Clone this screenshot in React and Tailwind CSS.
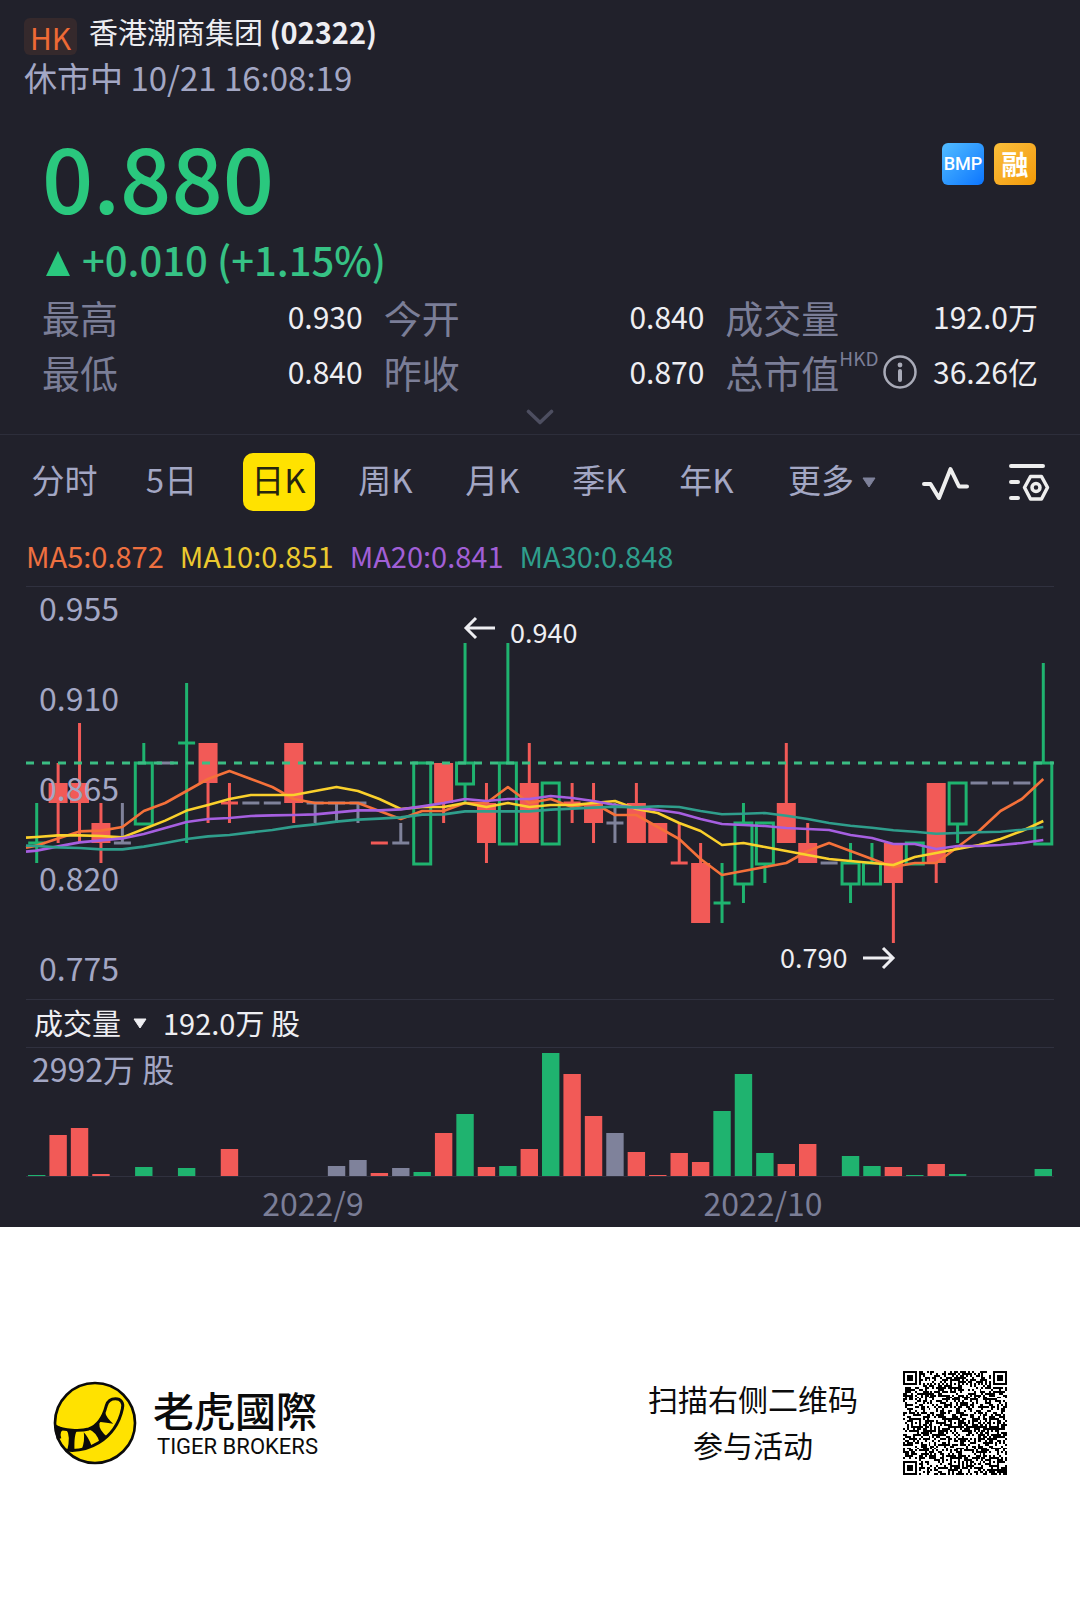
import React from "react";

const GREEN = "#1fb36f";
const RED = "#f25a57";
const GRAY = "#7f829b";

// [color, bodyTop, bodyBottom, high, low, volumeHeight] - prices in thousandths of HKD
const candles = [
  ["g", 840, 840, 860, 830, 1],
  ["r", 870, 860, 880, 840, 41],
  ["r", 870, 860, 900, 840, 48],
  ["r", 850, 840, 860, 830, 2],
  ["n", 840, 840, 860, 840, 0],
  ["g", 880, 850, 890, 850, 9],
  ["n", 880, 880, 880, 880, 0],
  ["g", 890, 890, 920, 840, 8],
  ["r", 890, 870, 890, 850, 0],
  ["r", 860, 860, 870, 850, 27],
  ["n", 860, 860, 860, 860, 0],
  ["n", 860, 860, 860, 860, 0],
  ["r", 890, 860, 890, 850, 0],
  ["n", 860, 860, 860, 850, 0],
  ["n", 860, 860, 860, 850, 10],
  ["n", 860, 860, 860, 850, 16],
  ["r", 840, 840, 840, 840, 3],
  ["n", 840, 840, 850, 840, 8],
  ["g", 880, 830, 880, 830, 4],
  ["r", 880, 860, 880, 850, 43],
  ["g", 880, 870, 940, 860, 62],
  ["r", 860, 840, 870, 830, 9],
  ["g", 880, 840, 940, 840, 10],
  ["r", 870, 840, 890, 840, 27],
  ["g", 870, 840, 870, 840, 123],
  ["r", 860, 860, 870, 850, 102],
  ["r", 860, 850, 870, 840, 60],
  ["n", 850, 850, 860, 840, 43],
  ["r", 860, 840, 870, 840, 24],
  ["r", 850, 840, 850, 840, 1],
  ["r", 830, 830, 850, 830, 23],
  ["r", 830, 800, 840, 800, 14],
  ["g", 810, 810, 830, 800, 65],
  ["g", 850, 820, 860, 810, 102],
  ["g", 850, 830, 850, 820, 23],
  ["r", 860, 840, 890, 840, 12],
  ["r", 840, 830, 850, 830, 32],
  ["n", 830, 830, 830, 830, 0],
  ["g", 830, 820, 840, 810, 20],
  ["g", 830, 820, 840, 820, 10],
  ["r", 840, 820, 840, 790, 9],
  ["g", 840, 830, 840, 830, 1],
  ["r", 870, 830, 870, 820, 12],
  ["g", 870, 850, 870, 840, 2],
  ["n", 870, 870, 870, 870, 0],
  ["n", 870, 870, 870, 870, 0],
  ["n", 870, 870, 870, 870, 0],
  ["g", 880, 840, 930, 840, 7],
];

const COLORS = { g: GREEN, r: RED, n: GRAY };
const STEP = 1028 / 48;
const cx = (i) => STEP * (i + 0.5);
const py = (p) => 176 + (880 - p) * 2;
const closes = candles.map((c) => (c[0] === "r" ? c[2] : c[1]));

// Averages that reach back before the first visible day start from known values;
// the first entry is the value at the left edge.
const averages = [
  { n: 5, color: "#f5713a", seed: [837.7, 838.7, 842.3, 845.8, 846.2] },
  { n: 10, color: "#fad02c", seed: [842.7, 843, 843.8, 843.8, 843.5, 842.8, 847, 851.2, 856.2, 859] },
  {
    n: 20,
    color: "#a65fe0",
    seed: [835.7, 836.2, 838.3, 840.3, 841.3, 842.3, 844.5, 847.5, 850.5, 852, 852.5, 853.5, 853.8, 854, 854.3, 855.3, 856.3, 856.3, 856.8, 858.3],
  },
  {
    n: 30,
    color: "#2f9e8c",
    seed: [838.7, 838.5, 837.8, 837.5, 836.8, 836.8, 838.2, 840, 842, 843.3, 844, 845.3, 846.5, 848.2, 849.3, 850.7, 851.7, 852.2, 852.8, 854.2, 854.3, 855.8, 855.8, 855.8, 855.8, 856.7, 857.2, 857.7, 858.2, 857.8],
  },
];

function averagePoints({ n, seed }) {
  const pts = [`0,${py(seed[0])}`];
  for (let i = 0; i < closes.length; i++) {
    const v =
      i + 1 < seed.length
        ? seed[i + 1]
        : closes.slice(i - n + 1, i + 1).reduce((a, b) => a + b, 0) / n;
    pts.push(`${cx(i).toFixed(1)},${py(v).toFixed(1)}`);
  }
  return pts.join(" ");
}

function Candle({ i, data }) {
  const [kind, top, bottom, high, low] = data;
  const color = COLORS[kind];
  const x = cx(i);
  const wick = (a, b) =>
    a !== b && <line x1={x} x2={x} y1={py(a)} y2={py(b)} stroke={color} strokeWidth="3" />;
  return (
    <g>
      {wick(high, top)}
      {wick(bottom, low)}
      {top === bottom ? (
        <rect x={x - 8.5} y={py(top) - 1.5} width="17" height="3" fill={color} />
      ) : kind === "g" ? (
        <rect x={x - 8.5} y={py(top)} width="17" height={(top - bottom) * 2 + 1} fill="none" stroke={color} strokeWidth="3" />
      ) : (
        <rect x={x - 9.5} y={py(top)} width="19" height={(top - bottom) * 2} fill={color} />
      )}
    </g>
  );
}

function PriceChart() {
  return (
    <svg viewBox="0 0 1028 412" className="block h-auto w-full overflow-visible" role="img" aria-label="日K">
      {candles.map((c, i) => (
        <Candle key={i} i={i} data={c} />
      ))}
      <line x1="0" x2="1028" y1="176" y2="176" stroke="#3bbd83" strokeWidth="3" strokeDasharray="8 8" />
      <g fill="#a3a7c4" fontSize="32">
        <text x="13" y="34">0.955</text>
        <text x="13" y="124">0.910</text>
        <text x="13" y="214">0.865</text>
        <text x="13" y="304">0.820</text>
        <text x="13" y="394">0.775</text>
      </g>
      {averages.map((a) => (
        <polyline key={a.n} points={averagePoints(a)} fill="none" stroke={a.color} strokeWidth="2.6" strokeLinejoin="round" />
      ))}
      <g fill="#eeeef2" fontSize="27">
        <text x="484" y="56">0.940</text>
        <text x="754" y="381">0.790</text>
      </g>
      <g fill="none" stroke="#eeeef2" strokeWidth="3">
        <path d="M469 41H440M450 31L440 41L450 51" />
        <path d="M837 371H867M857 361L867 371L857 381" />
      </g>
    </svg>
  );
}

function VolumeChart() {
  return (
    <svg viewBox="0 0 1028 179" className="block h-auto w-full overflow-visible" role="img" aria-label="成交量">
      <text x="6" y="34" fill="#a3a7c4" fontSize="32">2992万 股</text>
      {candles.map((c, i) =>
        c[5] ? <rect key={i} x={cx(i) - 8.7} y={128 - c[5]} width="17.4" height={c[5]} fill={COLORS[c[0]]} /> : null
      )}
      <rect x="0" y="128" width="1028" height="1" fill="#30313f" />
      <g fill="#7b7e97" fontSize="32" textAnchor="middle">
        <text x="287" y="168">2022/9</text>
        <text x="737" y="168">2022/10</text>
      </g>
    </svg>
  );
}

function buildCode() {
  const N = 53;
  let s = 20221;
  const rnd = () => {
    s = (s * 1103515245 + 12345) % 2147483648;
    return s / 2147483648;
  };
  const grid = Array.from({ length: N }, () => Array.from({ length: N }, () => rnd() > 0.5));
  const square = (r0, c0, size, pad) => {
    for (let r = -pad; r < size + pad; r++)
      for (let c = -pad; c < size + pad; c++) {
        const y = r0 + r;
        const x = c0 + c;
        if (y < 0 || x < 0 || y >= N || x >= N) continue;
        const d = Math.max(Math.abs(r - (size - 1) / 2), Math.abs(c - (size - 1) / 2));
        const edge = (size - 1) / 2;
        grid[y][x] = d <= edge && d !== edge - 1;
      }
  };
  for (let i = 8; i < N - 8; i++) {
    grid[6][i] = i % 2 === 0;
    grid[i][6] = i % 2 === 0;
  }
  for (const [r, c] of [[6, 26], [26, 6], [26, 26], [26, 46], [46, 26], [46, 46]]) square(r - 2, c - 2, 5, 0);
  square(0, 0, 7, 1);
  square(0, N - 7, 7, 1);
  square(N - 7, 0, 7, 1);
  let d = "";
  grid.forEach((row, y) => row.forEach((on, x) => { if (on) d += `M${x} ${y}h1v1h-1z`; }));
  return d;
}
const codePath = buildCode();

const stats = [
  ["最高", "0.930"],
  ["今开", "0.840"],
  ["成交量", "192.0万"],
  ["最低", "0.840"],
  ["昨收", "0.870"],
  ["总市值", "36.26亿"],
];

const tabs = ["分时", "5日", "日K", "周K", "月K", "季K", "年K"];

function TigerLogo() {
  return (
    <svg viewBox="68 62 254 252" className="size-[84px] shrink-0" aria-hidden="true">
      <circle cx="195" cy="188" r="121" fill="#ffe200" stroke="#0b0b0b" strokeWidth="8" />
      <g fill="none" stroke="#0b0b0b" strokeWidth="9" strokeLinecap="round" strokeLinejoin="round">
        <path d="M76 200C100 210 150 214 176 206C206 195 220 170 229 136C234 120 244 115 257 115C274 115 282 128 278 144C268 192 238 228 206 248C178 265 142 274 108 270" />
      </g>
      <g fill="#0b0b0b">
        <path d="M72 190L104 208Q86 210 93 234L80 238Q73 214 72 190Z" />
        <path d="M108 208L142 210Q131 220 133 272L111 272Q122 226 108 208Z" />
        <path d="M161 216Q176 232 185 258L155 268Q165 240 161 216Z" />
        <path d="M174 206L208 188Q206 210 233 230L209 248Q202 216 174 206Z" />
        <path d="M214 168L226 156Q228 170 250 190Q232 187 206 184Z" />
      </g>
    </svg>
  );
}

export default function App() {
  return (
    <div className="bg-white font-['Noto_Sans_CJK_SC',sans-serif]">
      <main className="bg-[#21212b] text-[#eeeef2]">
        <header className="px-6 pt-2.5">
          <div className="flex items-start gap-3">
            <span className="mt-2 flex h-[37px] w-[53px] items-center justify-center rounded-md bg-[#35292c] text-[30px] leading-9 text-[#ee6a35]">HK</span>
            <h1 className="text-[29px] leading-[42px]">
              香港潮商集团 <span className="font-bold">(02322)</span>
            </h1>
          </div>
          <p className="mt-1 text-[33px] leading-9 text-[#a3a7c4]">休市中 10/21 16:08:19</p>
        </header>

        <section className="px-[42px] pt-8">
          <div className="flex items-start justify-between">
            <p className="text-[90px] leading-[96px] font-medium text-[#2ac87e]">0.880</p>
            <div className="mt-4 flex gap-2.5 pr-0.5 leading-[42px] text-white">
              <span className="flex size-[42px] items-center justify-center rounded-md bg-linear-to-br from-[#52bcff] to-[#0b74ff] font-['Roboto',sans-serif] text-[18px] font-medium">BMP</span>
              <span className="flex size-[42px] items-center justify-center rounded-md bg-linear-to-br from-[#fbbf3a] to-[#f29a00] text-[27px] font-bold">融</span>
            </div>
          </div>
          <p className="mt-2.5 flex items-center gap-3 text-[40px] leading-[52px] font-medium text-[#36c285]">
            <svg viewBox="0 0 24 26" className="mt-2 ml-1 h-[26px] w-6" aria-hidden="true">
              <path d="M12 1L24 26H0Z" fill="#2ac87e" />
            </svg>
            +0.010 (+1.15%)
          </p>
          <dl className="mt-1 grid grid-cols-[320fr_320fr_312fr] gap-x-[21px]">
            {stats.map(([label, value]) => (
              <div key={label} className="flex h-[55px] items-center whitespace-nowrap">
                <dt className="flex items-center text-[38px] leading-[55px] text-[#7b7e97]">
                  {label}
                  {label === "总市值" && (
                    <>
                      <span className="mb-7 text-[19px] leading-6">HKD</span>
                      <button type="button" aria-label="总市值说明" className="ml-1">
                        <svg viewBox="0 0 34 34" className="size-[34px]" aria-hidden="true">
                          <circle cx="17" cy="17" r="15.5" fill="none" stroke="#a9abb8" strokeWidth="2.5" />
                          <circle cx="17" cy="10" r="2.4" fill="#a9abb8" />
                          <path d="M17 16V25" stroke="#a9abb8" strokeWidth="4" strokeLinecap="round" />
                        </svg>
                      </button>
                    </>
                  )}
                </dt>
                <dd className="ml-auto text-[30px] leading-[55px]">{value}</dd>
              </div>
            ))}
          </dl>
          <div className="flex h-[35px] justify-center pt-2.5">
            <button type="button" aria-label="展开" className="h-4">
              <svg viewBox="0 0 28 16" className="h-4 w-7" aria-hidden="true">
                <path d="M2.500 2.500L14 13.500L25.500 2.500" fill="none" stroke="#4d4e60" strokeWidth="3.600" strokeLinecap="round" strokeLinejoin="round" />
              </svg>
            </button>
          </div>
        </section>

        <nav className="flex h-[95px] items-center border-t border-[#2d2e3b] pr-[30px] pl-[11px] text-[33px] text-[#a3a7c4]">
          {tabs.map((t) => (
            <div key={t} className="flex basis-[107px] justify-center">
              <button
                type="button"
                aria-pressed={t === "日K"}
                className={
                  t === "日K"
                    ? "h-[58px] w-[72px] rounded-[10px] bg-[#ffe200] pb-1 text-[#26250f]"
                    : "h-[58px] w-[72px] pb-1"
                }
              >
                {t}
              </button>
            </div>
          ))}
          <label className="ml-7 flex items-center gap-2">
            <select aria-label="更多周期" className="w-[66px] appearance-none bg-transparent pb-1">
              <option>更多</option>
            </select>
            <svg viewBox="0 0 14 11" className="h-[11px] w-3.5" aria-hidden="true">
              <path d="M1 1H13L7 10Z" fill={GRAY} stroke={GRAY} strokeLinejoin="round" />
            </svg>
          </label>
          <div className="ml-auto flex items-center gap-[39px] text-[#eeeeee]">
            <button type="button" aria-label="指标">
              <svg viewBox="0 0 48 40" className="h-10 w-12" fill="none" stroke="currentColor" strokeWidth="4" strokeLinecap="round" strokeLinejoin="round" aria-hidden="true">
                <path d="M3 22H9.500L18 36L29.500 7L38 24.500H46" />
              </svg>
            </button>
            <button type="button" aria-label="图表设置">
              <svg viewBox="0 0 42 40" className="h-10 w-[42px]" fill="none" stroke="currentColor" strokeWidth="4" strokeLinecap="round" strokeLinejoin="round" aria-hidden="true">
                <path d="M3 4H35M3 20H10M3 36H10" />
                <path d="M22.500 14.500H33.500L39.500 25.500L33.500 37H22.500L16.500 25.500Z" strokeWidth="3.500" />
                <circle cx="28" cy="25.500" r="4" strokeWidth="3.500" />
              </svg>
            </button>
          </div>
        </nav>

        <section className="px-[26px]">
          <ul className="flex h-[58px] items-center gap-4 border-b border-[#30313f] pb-1.5 text-[29px] leading-10">
            <li className="text-[#ee7040]">MA5:0.872</li>
            <li className="text-[#ecc92f]">MA10:0.851</li>
            <li className="text-[#a15fd6]">MA20:0.841</li>
            <li className="text-[#2f9e8c]">MA30:0.848</li>
          </ul>
          <PriceChart />
          <div className="flex h-[49px] items-center gap-4 border-y border-[#30313f] pl-2 text-[29px] leading-10">
            <label className="flex items-center gap-3">
              <select aria-label="副图指标" className="w-[87px] appearance-none bg-transparent pb-1">
                <option>成交量</option>
              </select>
              <svg viewBox="0 0 14 11" className="h-[11px] w-3.5" aria-hidden="true">
                <path d="M1 1H13L7 10Z" fill="#eeeef2" stroke="#eeeef2" strokeLinejoin="round" />
              </svg>
            </label>
            <span className="pb-1">192.0万 股</span>
          </div>
          <VolumeChart />
        </section>
      </main>

      <footer className="flex items-center justify-between pt-36 pr-[73px] pb-36 pl-[53px] text-[#0b0b0b]">
        <div className="flex items-center gap-4">
          <TigerLogo />
          <div>
            <p className="font-['Noto_Sans_CJK_TC',sans-serif] text-[41px] leading-[52px] font-medium">老虎國際</p>
            <p className="pb-1 pl-1 font-['Roboto',sans-serif] text-[22px] leading-6">TIGER BROKERS</p>
          </div>
        </div>
        <div className="flex items-center gap-[45px]">
          <p className="pb-1 text-center text-[30px] leading-[46px]">
            扫描右侧二维码
            <br />
            参与活动
          </p>
          <svg viewBox="0 0 53 53" className="size-[104px]" shapeRendering="crispEdges" role="img" aria-label="二维码">
            <path d={codePath} fill="#000" />
          </svg>
        </div>
      </footer>
    </div>
  );
}
